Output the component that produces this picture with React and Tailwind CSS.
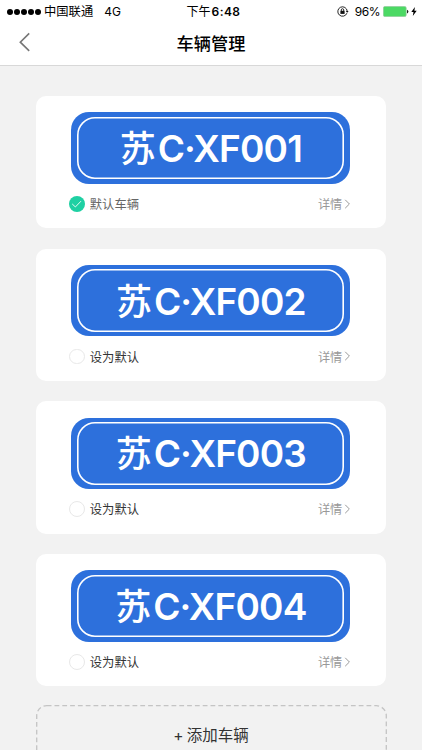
const vehicles = [
  { id: 'XF001', isDefault: true },
  { id: 'XF002', isDefault: false },
  { id: 'XF003', isDefault: false },
  { id: 'XF004', isDefault: false },
];

function StatusBar() {
  return (
    <div className="grid h-[22px] grid-cols-[1fr_auto_1fr] items-center pl-[7px] pr-[5px] text-black">
      <div className="flex items-center">
        <div className="flex gap-[1px]">
          {[0, 1, 2, 3, 4].map((i) => (
            <span key={i} className="size-[6px] rounded-full bg-black" />
          ))}
        </div>
        <span className="ml-[3px] pt-[1px] text-[12.3px] leading-[22px]">中国联通</span>
        <span className="ml-[11px] text-[12px] leading-[22px]">4G</span>
      </div>
      <div className="flex items-center pl-[3px] text-[12px] leading-[22px]">
        <span className="pt-[1px]">下午</span>
        <span className="ml-[1px] font-semibold tracking-[0.4px]">6:48</span>
      </div>
      <div className="flex items-center justify-end">
        <svg className="mr-[6px] h-[11px] w-[12px]" viewBox="0 0 12 11" fill="none" stroke="#111" strokeWidth="0.9">
          <path d="M9.9 7.2A4.7 4.7 0 1 1 10.2 5.2" />
          <path d="M8.8 5h2.8l-1.4 1.8z" fill="#111" stroke="none" />
          <rect x="3.4" y="4.8" width="4.2" height="3.1" fill="#111" stroke="none" />
          <path d="M4.3 5V3.9a1.2 1.2 0 0 1 2.4 0V5" />
        </svg>
        <span className="mr-[3px] text-[12px] leading-[22px] tracking-[-0.5px]">96%</span>
        <svg className="h-[11px] w-[26px]" viewBox="0 0 26 11">
          <rect x="0.4" y="0.4" width="22.8" height="10.2" rx="1.6" fill="#4cd964" stroke="#8fc79a" strokeWidth="0.7" />
          <path d="M24 3.7a2 2 0 0 1 0 3.8z" fill="#222" />
        </svg>
        <svg className="ml-[2px] h-[9px] w-[6px]" viewBox="0 0 6 9">
          <path d="M3.9 0 0.3 5h2.2L1.8 9 5.7 3.7H3.4z" fill="#000" />
        </svg>
      </div>
    </div>
  );
}

function Header() {
  return (
    <div className="grid h-[43px] grid-cols-[1fr_auto_1fr] items-center">
      <svg className="ml-[18px] mt-[-3px] h-[20px] w-[13px]" viewBox="0 0 13 20" fill="none" stroke="#777" strokeWidth="1.6">
        <path d="M11.2 1.4 2.3 10.2l8.9 8.6" />
      </svg>
      <h1 className="text-[17.2px] font-medium leading-[42px] text-black">车辆管理</h1>
    </div>
  );
}

function Plate({ id }) {
  return (
    <div className="h-[71.4px] w-[279px] rounded-[18px] bg-[#2d70dc] px-[6px] py-[4.4px]">
      <div className="flex h-full items-center justify-center rounded-[18px] pt-[2px] text-white shadow-[inset_0_0_0_1.6px_#fff]">
        <span className="text-[36px] font-medium leading-[50px]">苏</span>
        <span className="ml-[2px] text-[37px] font-semibold leading-[50px] tracking-[-0.85px]">C·{id}</span>
      </div>
    </div>
  );
}

function VehicleCard({ id, isDefault }) {
  return (
    <div className="h-[132.3px] w-[350px] rounded-[10px] bg-white pl-[35.3px] pt-[16.2px]">
      <Plate id={id} />
      <div className="-ml-[2px] mt-[10.2px] flex h-[20px] w-[282px] items-center">
        {isDefault ? (
          <span className="flex size-[15.5px] items-center justify-center rounded-full bg-[#1fd0a3]">
            <svg className="size-[15.5px]" viewBox="0 0 16 16" fill="none" stroke="#fff" strokeWidth="0.9">
              <path d="m3.3 8.2 3.3 3.1L12.4 5.3" />
            </svg>
          </span>
        ) : (
          <span className="size-[15.5px] rounded-full border border-[#e8e8e8] bg-white" />
        )}
        <span className={`ml-[5px] pt-[2.4px] text-[12.3px] leading-[20px] ${isDefault ? 'text-[#666]' : 'text-[#333]'}`}>
          {isDefault ? '默认车辆' : '设为默认'}
        </span>
        <span className="ml-auto pt-[2.4px] text-[12.2px] leading-[20px] text-[#999]">详情</span>
        <svg className="ml-[2px] h-[10px] w-[7px]" viewBox="0 0 7 10" fill="none" stroke="#999" strokeWidth="1">
          <path d="m1.2 0.8 4.2 4.2-4.2 4.2" />
        </svg>
      </div>
    </div>
  );
}

function AddVehicle() {
  return (
    <button className="-mt-[2px] grid h-[60px] w-[351px] shrink-0 place-items-center">
      <svg className="col-start-1 row-start-1 h-[60px] w-[351px]" viewBox="0 0 351 60" fill="none">
        <rect x="0.7" y="0.7" width="349.6" height="58.6" rx="10" stroke="#c4c4c4" strokeWidth="1.3" strokeDasharray="4.8 3" />
      </svg>
      <span className="col-start-1 row-start-1 pt-[1px] text-[15.5px] leading-[59px] text-[#333]">
        <span className="mr-[-1px]">+ </span>添加车辆
      </span>
    </button>
  );
}

export default function App() {
  return (
    <div className="h-[750px] w-[422px] overflow-hidden bg-[#f2f2f2] font-[Inter,'Noto_Sans_CJK_SC',sans-serif]">
      <header className="h-[66px] border-b border-[#d8d8d8] bg-white">
        <StatusBar />
        <Header />
      </header>
      <main className="flex flex-col items-center gap-[20.4px] pt-[30px]">
        {vehicles.map((v) => (
          <VehicleCard key={v.id} id={v.id} isDefault={v.isDefault} />
        ))}
        <AddVehicle />
      </main>
    </div>
  );
}
